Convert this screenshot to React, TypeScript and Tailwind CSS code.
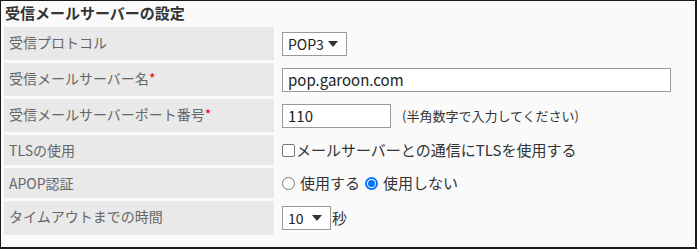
import React from "react";

const jp = { fontFamily: '"Noto Sans CJK JP", "Noto Sans", sans-serif' };

function Select({ value, width }: { value: string; width: string }) {
  return (
    <div
      className={`flex h-[24px] ${width} items-center justify-between border border-[#999] bg-white pl-[5px] pr-[8px] text-[14px] leading-[18px] text-[#222]`}
    >
      <span>{value}</span>
      <svg width="10" height="6" viewBox="0 0 10 6">
        <path d="M0 0 H10 L5 6 Z" fill="#333" />
      </svg>
    </div>
  );
}

function Radio({ checked }: { checked?: boolean }) {
  return checked ? (
    <span className="inline-flex h-[13px] w-[13px] items-center justify-center rounded-full bg-[#0075ff]">
      <span className="inline-flex h-[9px] w-[9px] items-center justify-center rounded-full bg-white">
        <span className="h-[7px] w-[7px] rounded-full bg-[#0075ff]" />
      </span>
    </span>
  ) : (
    <span className="inline-block h-[13px] w-[13px] rounded-full border border-[#777] bg-white" />
  );
}

export default function App() {
  const labelCls =
    "w-[270px] bg-[#e9e9e9] p-0 pl-[5px] pt-[5px] align-top text-[14px] leading-[20px] text-[#666]";
  const valCls = "p-0 pl-[5px] align-middle text-[15px] leading-[20px] text-[#333]";
  const req = <span className="text-[#e00]">*</span>;
  return (
    <div
      style={jp}
      className="box-border h-[249px] w-[697px] border-t border-l border-r-2 border-b-2 border-[#1a1a1a] bg-[#fafafa]"
    >
      <div className="h-[23px] pl-[4px] pt-[2px] text-[15px] font-bold leading-[20px] text-[#333]">
        受信メールサーバーの設定
      </div>
      <table className="w-full border-separate border-spacing-[3px]">
        <tbody>
          <tr className="h-[33px]">
            <td className={labelCls}>受信プロトコル</td>
            <td className={valCls}>
              <Select value="POP3" width="w-[65px]" />
            </td>
          </tr>
          <tr className="h-[33px]">
            <td className={labelCls}>受信メールサーバー名{req}</td>
            <td className={valCls}>
              <div className="flex h-[24px] w-[389px] items-center border border-[#999] bg-white pl-[5px] text-[15px] text-[#222]">
                pop.garoon.com
              </div>
            </td>
          </tr>
          <tr className="h-[33px]">
            <td className={labelCls}>受信メールサーバーポート番号{req}</td>
            <td className={valCls}>
              <div className="flex items-center">
                <div className="flex h-[24px] w-[109px] items-center border border-[#999] bg-white pl-[5px] text-[15px] text-[#222]">
                  110
                </div>
                <span className="ml-[11px] text-[13px] text-[#333]">(半角数字で入力してください)</span>
              </div>
            </td>
          </tr>
          <tr className="h-[30px]">
            <td className={labelCls}>TLSの使用</td>
            <td className={valCls}>
              <div className="flex items-center">
                <span className="inline-block h-[13px] w-[13px] rounded-[2px] border border-[#777] bg-white" />
                <span className="ml-[1px]">メールサーバーとの通信にTLSを使用する</span>
              </div>
            </td>
          </tr>
          <tr className="h-[30px]">
            <td className={labelCls}>APOP認証</td>
            <td className={valCls}>
              <div className="flex items-center">
                <Radio />
                <span className="ml-[5px]">使用する</span>
                <span className="ml-[5px] inline-flex">
                  <Radio checked />
                </span>
                <span className="ml-[5px]">使用しない</span>
              </div>
            </td>
          </tr>
          <tr className="h-[34px]">
            <td className={labelCls}>タイムアウトまでの時間</td>
            <td className={valCls}>
              <div className="flex items-center">
                <Select value="10" width="w-[49px]" />
                <span className="ml-[1px]">秒</span>
              </div>
            </td>
          </tr>
        </tbody>
      </table>
    </div>
  );
}
